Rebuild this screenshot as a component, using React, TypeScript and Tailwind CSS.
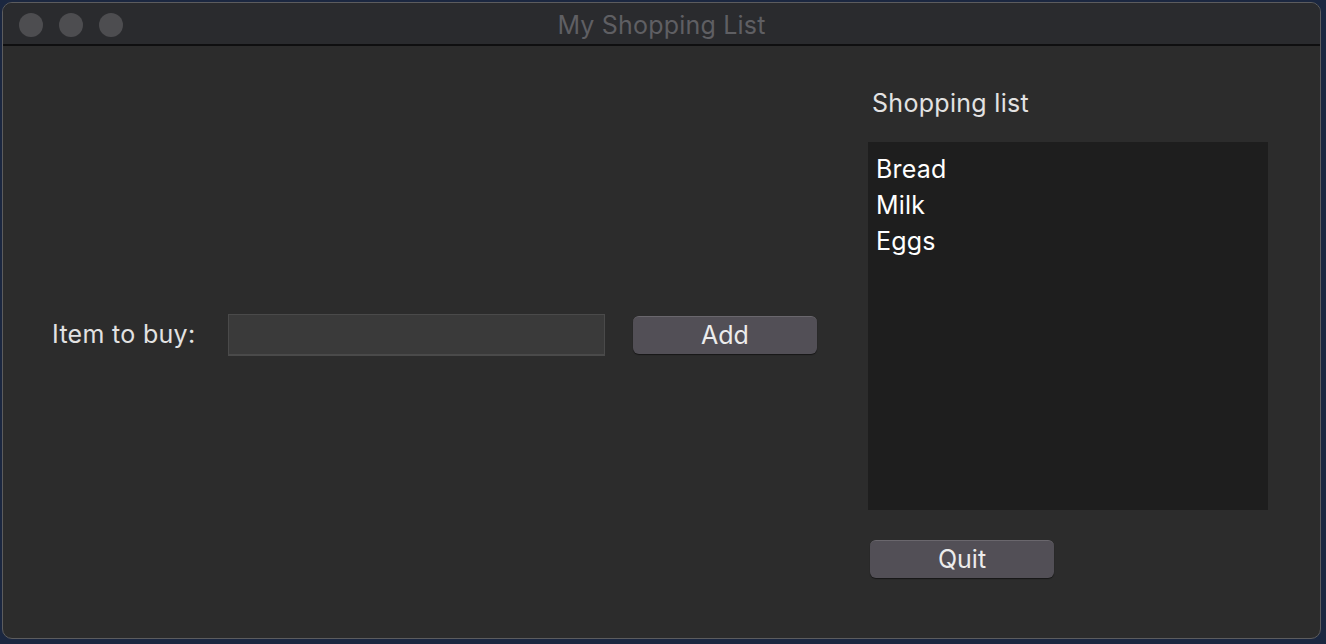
import React from "react";

export default function App() {
  const font = { fontFamily: "Inter, 'Noto Sans', 'Liberation Sans', sans-serif" };
  return (
    <div className="w-[1326px] h-[644px] bg-[#1b2740] p-[2px] pr-[5px] pb-[5px] overflow-hidden" style={font}>
      <div className="w-full h-full rounded-[10px] border border-[#5c5c5e] bg-[#2c2c2c] overflow-hidden flex flex-col">
        <div className="h-[43px] shrink-0 bg-[#2a2b2e] border-b-2 border-[#0f0f10] relative flex items-center">
          <div className="flex gap-[16px] pl-[16px] pt-[2px]">
            <div className="w-[24px] h-[24px] rounded-full bg-[#4d4d50]" />
            <div className="w-[24px] h-[24px] rounded-full bg-[#4d4d50]" />
            <div className="w-[24px] h-[24px] rounded-full bg-[#4d4d50]" />
          </div>
          <div className="absolute inset-0 pt-[4px] flex items-center justify-center text-[25px] tracking-[0.2px] text-[#5f5f63]">
            My Shopping List
          </div>
        </div>
        <div className="flex-1 flex">
          <div className="w-[865px] flex items-center pl-[49px] pb-[15px]">
            <span className="text-[25px] tracking-[0.3px] text-[#e2e2e2] w-[176px]">Item to buy:</span>
            <div className="w-[377px] h-[42px] bg-[#3a3a3a] border border-[#4a4a4a] border-b-2" />
            <button className="ml-[28px] mt-[1px] w-[184px] h-[38px] rounded-[6px] bg-[#524f56] border-t border-[#6a676d] shadow-[0_1px_1px_rgba(0,0,0,0.5)] text-[25px] text-[#ececec] leading-none">
              Add
            </button>
          </div>
          <div className="flex flex-col pt-[42px]">
            <div className="pl-[4px] text-[25px] tracking-[0.3px] text-[#e2e2e2] h-[30px] leading-[30px]">Shopping list</div>
            <div className="mt-[24px] w-[400px] h-[368px] bg-[#1e1e1e] pt-[9px] pl-[8px] text-[25px] tracking-[0.2px] text-white leading-[36px]">
              <div>Bread</div>
              <div>Milk</div>
              <div>Eggs</div>
            </div>
            <button className="mt-[30px] ml-[2px] w-[184px] h-[38px] rounded-[6px] bg-[#524f56] border-t border-[#6a676d] shadow-[0_1px_1px_rgba(0,0,0,0.5)] text-[25px] text-[#ececec] leading-none">
              Quit
            </button>
          </div>
        </div>
      </div>
    </div>
  );
}
